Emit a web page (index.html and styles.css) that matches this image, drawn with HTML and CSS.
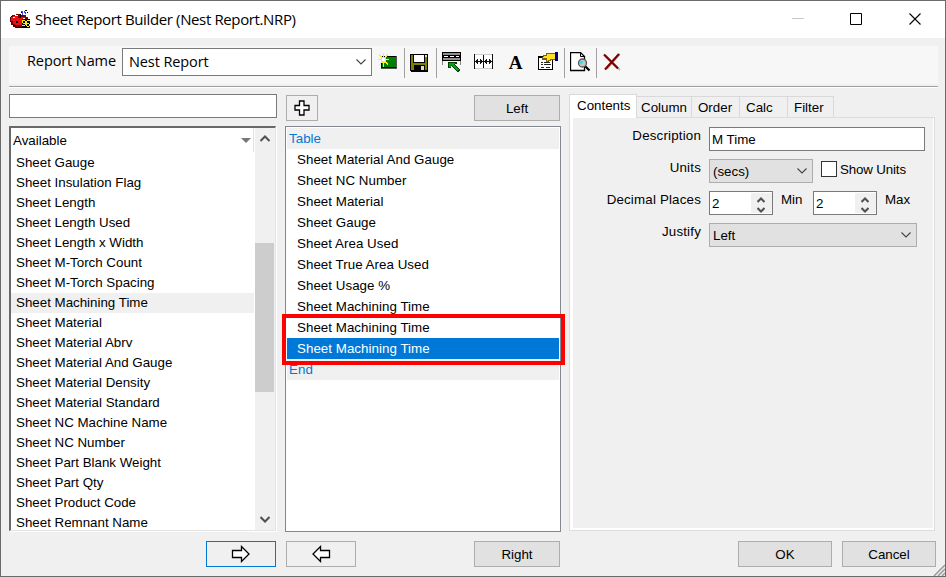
FILE: index.html
```html
<!DOCTYPE html>
<html lang="en">
<head>
    <meta charset="UTF-8">
    <title>Sheet Report Builder (Nest Report.NRP)</title>
    <link rel="stylesheet" href="styles.css">
</head>
<body>
    <div class="window">
        <div class="titlebar">
            <svg class="app-icon" width="22" height="20" viewBox="0 0 22 20" shape-rendering="crispEdges">
                <path d="M2 5h4V4h5v1h5v2h2v8h-2v2h-2v1H5v-1H3v-2H1v-3H0V7h2z" fill="#7a0000"/>
                <path d="M3 6h5v1h7v8H5v-1H3v-3H1V7h2z" fill="#e81010"/>
                <path d="M3 7h2v1H3zM5 5h3v1H5zM13 8h2v1h-2z" fill="#fff"/>
                <path d="M1 6h1v1H1zM6 11h2v2H6zM8 7h2v1H8zM3 15h3v1H3zM6 17h8v1H6zM10 4h1v4h-1zM11 2h1v1h-1zM15 0h2v1h-2zM17 2h1v1h-1z" fill="#000"/>
                <path d="M11 1h2v1h-2zM12 2h1v3h-1zM15 2h1v2h-1zM14 1h1v2h-1z" fill="#3848e0"/>
                <path d="M12 9h8v9h-8z" fill="#000"/>
                <path d="M12 10h3v1h-3zM12 11h1v2h-1zM15 11h1v4h-1zM13 13h2v1h-2zM12 15h3v1h-3zM17 10h3v1h-3zM16 11h1v5h-1zM17 13h2v1h-2zM19 14h1v2h-1zM17 16h2v1h-2z" fill="#ffef00"/>
            </svg>
            <span class="title">Sheet Report Builder (Nest Report.NRP)</span>
            <svg class="caption" width="131" height="14" viewBox="0 0 131 14" fill="none">
                <path d="M0 6.500h12" stroke="#c8c8c8"/>
                <path d="M58.500 1.500h11v11h-11z" stroke="#000"/>
                <path d="M117.500 1.500l11 11M128.500 1.500l-11 11" stroke="#000" stroke-width="1.100"/>
            </svg>
        </div>

        <div class="toolbar">
            <label class="report-label">Report Name</label>
            <div class="report-combo">
                <span>Nest Report</span>
                <svg class="chevron" width="10" height="6" viewBox="0 0 10 6"><path d="M.5.5L5 5 9.500.5"/></svg>
            </div>
            <div class="tool new">
                <svg width="20" height="20" viewBox="0 0 20 20" shape-rendering="crispEdges">
                    <path d="M3 4h16v13H3z" fill="#000"/>
                    <path d="M4 5h14v10H4z" fill="#008000"/>
                    <path d="M18 4h1v12h-1zM3 16h16v1H3z" fill="#555"/>
                    <path d="M5 1h1v14H5zM0 7h11v1H0zM1 2h1v1h1v1h1v1h3V4h1V3h1V2h1v2H9v1H8v5h1v1h1v2H9v-1H8v-1H3v1H2v1H1v-1h1v-1h1V5H2V4H1z" fill="#ffee20"/>
                    <path d="M4 6h3v3H4z" fill="#fff"/>
                </svg>
            </div>
            <div class="sep"></div>
            <div class="tool save">
                <svg width="20" height="20" viewBox="0 0 20 20" shape-rendering="crispEdges">
                    <path d="M1 2h18v18H2v-1H1z" fill="#000"/>
                    <path d="M2 3h2v8h12V3h2v15H2z" fill="#808000"/>
                    <path d="M5 3h10v7H5z" fill="#fff"/>
                    <path d="M4 3h1v8H4zM15 3h1v8h-1zM5 13h11v6H5z" fill="#000"/>
                    <path d="M12 14h3v4h-3zM16 3h2v2h-2z" fill="#ddd"/>
                </svg>
            </div>
            <div class="sep"></div>
            <div class="tool">
                <svg width="20" height="22" viewBox="0 0 20 22" shape-rendering="crispEdges">
                    <path d="M0 1h19v9H0z" fill="#000"/>
                    <path d="M1 2h17v2H1z" fill="#909090"/>
                    <path d="M2 5h4v1H2zM8 5h4v1H8zM14 5h3v1h-3z" fill="#fff"/>
                    <path d="M1 7h17v2H1z" fill="#909090"/>
                    <path d="M0 10h1v4H0zM18 10h1v4h-1z" fill="#888"/>
                    <path d="M6 11h9v2h-2v1h1v1h1v1h1v1h1v1h1v2h-1v1h-2v-1h-1v-1h-1v-1h-1v-1h-1v-1h-1v-1h-1v2H6z" fill="#004000"/>
                    <path d="M7 12h6v1h-1v1h1v1h1v1h1v1h1v1h1v1h-1v1h-1v-1h-1v-1h-1v-1h-1v-1h-1v-1h-1v-1H9v2H7z" fill="#00a020"/>
                </svg>
            </div>
            <div class="tool">
                <svg width="20" height="20" viewBox="0 0 20 20" shape-rendering="crispEdges">
                    <path d="M1 2h17v15H1z" fill="#fff"/>
                    <path d="M0 2h1v15H0zM9 2h1v15H9zM18 2h1v15h-1zM1 9h17v1H1zM2 8h1v3H2zM3 7h1v5H3zM16 8h1v3h-1zM15 7h1v5h-1zM7 8h1v3H7zM6 7h1v5H6zM11 8h1v3h-1zM12 7h1v5h-1z" fill="#111"/>
                    <path d="M1 2h17v1H1zM1 16h17v1H1z" fill="#ccc"/>
                </svg>
            </div>
            <div class="tool letter">A</div>
            <div class="tool">
                <svg width="21" height="20" viewBox="0 0 21 20" shape-rendering="crispEdges">
                    <path d="M0 4h15v14H0z" fill="#000"/>
                    <path d="M1 6h13v11H1z" fill="#fff"/>
                    <path d="M3 10h2v1H3zM3 12h2v1H3zM3 15h3v1H3zM6 12h7v1H6zM6 10h6v1H6zM8 15h4v1H8z" fill="#222"/>
                    <path d="M5 3h3V1h9v7h-4v1h-2v1H8V8H4V5h1z" fill="#806000"/>
                    <path d="M6 4h3V2h8v5h-5v1h-2v1H9V6H5V5h1z" fill="#ffe020"/>
                    <path d="M17 0h3v9h-3z" fill="#000080"/>
                </svg>
            </div>
            <div class="sep"></div>
            <div class="tool">
                <svg width="21" height="20" viewBox="0 0 21 20">
                    <path d="M.5.5h10l4 4v14H.500z" fill="#fff" stroke="#000" stroke-width="1.300"/>
                    <path d="M10.500.5v4h4" fill="none" stroke="#000"/>
                    <path d="M15 14l4.500 4.500" stroke="#000" stroke-width="2.200"/>
                    <circle cx="12.500" cy="11" r="4" fill="#c4c4c4" stroke="#555" stroke-width="1.300"/>
                    <path d="M10 10h3M11 9v3" stroke="#20e0f0" stroke-width="1.500"/>
                </svg>
            </div>
            <div class="sep"></div>
            <div class="tool">
                <svg width="20" height="20" viewBox="0 0 20 20">
                    <path d="M3 3l15 15M18 2L5 17" stroke="#b8b8b8" stroke-width="1.800"/>
                    <path d="M2 2.500l14 14M17 2L3 17.500" stroke="#800000" stroke-width="2.200"/>
                </svg>
            </div>
        </div>

        <div class="main">
            <div class="available-col">
                <div class="search"></div>
                <div class="available">
                    <div class="available-body">
                        <div class="available-head"><span>Available</span><i class="sort"></i></div>
                        <ul class="fields">
                            <li>Sheet Gauge</li>
                            <li>Sheet Insulation Flag</li>
                            <li>Sheet Length</li>
                            <li>Sheet Length Used</li>
                            <li>Sheet Length x Width</li>
                            <li>Sheet M-Torch Count</li>
                            <li>Sheet M-Torch Spacing</li>
                            <li class="current">Sheet Machining Time</li>
                            <li>Sheet Material</li>
                            <li>Sheet Material Abrv</li>
                            <li>Sheet Material And Gauge</li>
                            <li>Sheet Material Density</li>
                            <li>Sheet Material Standard</li>
                            <li>Sheet NC Machine Name</li>
                            <li>Sheet NC Number</li>
                            <li>Sheet Part Blank Weight</li>
                            <li>Sheet Part Qty</li>
                            <li>Sheet Product Code</li>
                            <li>Sheet Remnant Name</li>
                        </ul>
                    </div>
                    <div class="scrollbar">
                        <svg width="10" height="7" viewBox="0 0 10 7"><path d="M.5 6L5 1.500 9.500 6"/></svg>
                        <div class="thumb"></div>
                        <svg width="10" height="7" viewBox="0 0 10 7"><path d="M.5 1L5 5.500 9.500 1"/></svg>
                    </div>
                </div>
                <button class="btn arrow focused">
                    <svg width="20" height="18" viewBox="0 0 20 18"><path d="M1.500 5.500h9V1.500l7.500 7.500-7.500 7.500v-4h-9z"/></svg>
                </button>
            </div>

            <div class="table-col">
                <div class="row-top">
                    <button class="btn add">
                        <svg width="16" height="16" viewBox="0 0 16 16"><path d="M5.500 1h4.500v4.500H15V10h-5v5H5.500v-5H1V5.500h4.500z"/></svg>
                    </button>
                    <button class="btn side">Left</button>
                </div>
                <div class="table-list">
                    <div class="group">Table</div>
                    <div class="item">Sheet Material And Gauge</div>
                    <div class="item">Sheet NC Number</div>
                    <div class="item">Sheet Material</div>
                    <div class="item">Sheet Gauge</div>
                    <div class="item">Sheet Area Used</div>
                    <div class="item">Sheet True Area Used</div>
                    <div class="item">Sheet Usage %</div>
                    <div class="item">Sheet Machining Time</div>
                    <div class="item">Sheet Machining Time</div>
                    <div class="item selected">Sheet Machining Time</div>
                    <div class="group">End</div>
                    <div class="highlight"></div>
                </div>
                <div class="row-bottom">
                    <button class="btn arrow">
                        <svg width="20" height="18" viewBox="0 0 20 18"><path d="M18.500 5.500h-9V1.500L2 9l7.500 7.500v-4h9z"/></svg>
                    </button>
                    <button class="btn side">Right</button>
                </div>
            </div>

            <div class="props-col">
                <div class="tabs">
                    <div class="tab active">Contents</div>
                    <div class="tab column">Column</div>
                    <div class="tab order">Order</div>
                    <div class="tab calc">Calc</div>
                    <div class="tab filter">Filter</div>
                </div>
                <div class="page">
                    <div class="form-row">
                        <label>Description</label>
                        <div class="input description">M Time</div>
                    </div>
                    <div class="form-row">
                        <label>Units</label>
                        <div class="select units">(secs)<svg class="chevron" width="10" height="6" viewBox="0 0 10 6"><path d="M.5.5L5 5 9.500.5"/></svg></div>
                        <span class="checkbox"></span>
                        <span class="text check-text">Show Units</span>
                    </div>
                    <div class="form-row">
                        <label>Decimal Places</label>
                        <div class="input spin">2<span class="updown"><svg width="8" height="16" viewBox="0 0 8 16"><path d="M.5 5L4 1.500 7.500 5M.5 11L4 14.500 7.500 11"/></svg></span></div>
                        <span class="text min">Min</span>
                        <div class="input spin">2<span class="updown"><svg width="8" height="16" viewBox="0 0 8 16"><path d="M.5 5L4 1.500 7.500 5M.5 11L4 14.500 7.500 11"/></svg></span></div>
                        <span class="text max">Max</span>
                    </div>
                    <div class="form-row">
                        <label>Justify</label>
                        <div class="select justify">Left<svg class="chevron" width="10" height="6" viewBox="0 0 10 6"><path d="M.5.5L5 5 9.500.5"/></svg></div>
                    </div>
                </div>
                <div class="dialog-buttons">
                    <button class="btn dialog">OK</button>
                    <button class="btn dialog">Cancel</button>
                </div>
            </div>
        </div>
        <svg class="grip" width="12" height="12" viewBox="0 0 12 12"><path d="M1 12L12 1M5 12l7-7M9 12l3-3"/></svg>
    </div>
</body>
</html>
```
FILE: styles.css
```css
* {
    margin: 0;
    padding: 0;
    box-sizing: border-box;
}

body {
    width: 946px;
    height: 577px;
    overflow: hidden;
    font-family: "Liberation Sans", Arial, sans-serif;
    font-size: 13.33px;
    color: #000;
}

.window {
    position: relative;
    width: 946px;
    height: 577px;
    background: #f0f0f0;
    border: 1px solid #6a6a6a;
}

.titlebar {
    display: flex;
    align-items: center;
    height: 37px;
    padding-left: 9px;
    padding-right: 22px;
    background: #fff;
}

.title {
    margin: -2px 0 0 3px;
    font-family: "Open Sans", "Noto Sans", sans-serif;
    font-size: 15px;
    letter-spacing: -0.37px;
    white-space: nowrap;
}

.caption {
    margin-left: auto;
    margin-top: -2px;
}

.toolbar {
    display: flex;
    align-items: flex-start;
    width: 929px;
    height: 41px;
    margin: 8px 0 0 8px;
    padding-top: 2px;
    background: linear-gradient(#f7f7f7 38px, #f0f0f0 38px);
    border-bottom: 1px solid #a0a0a0;
    box-shadow: 0 1px 0 #fff;
}

.report-label,
.report-combo {
    font-family: "Open Sans", "Noto Sans", sans-serif;
    font-size: 14.5px;
    letter-spacing: -0.1px;
    line-height: 26px;
}

.report-label {
    width: 113px;
    padding-left: 18px;
    white-space: nowrap;
}

.report-combo {
    display: flex;
    align-items: center;
    justify-content: space-between;
    width: 250px;
    height: 28px;
    padding: 0 5px 0 6px;
    background: #fff;
    border: 1px solid #7a7a7a;
}

.chevron {
    fill: none;
    stroke: #444;
    stroke-width: 1.1;
}

.tool {
    display: flex;
    align-items: center;
    justify-content: center;
    width: 32px;
    height: 28px;
}

.new {
    padding-right: 1px;
}

.save {
    padding-right: 3px;
}

.sep {
    width: 1px;
    height: 30px;
    margin: 0 -1px 0 0;
    background: #a0a0a0;
}

.letter {
    padding: 2px 1px 0 0;
    font-family: "Liberation Serif", serif;
    font-size: 19px;
    font-weight: bold;
}

.main {
    display: flex;
    gap: 8px;
    padding: 7px 0 0 8px;
}

.available-col {
    display: flex;
    flex-direction: column;
    width: 268px;
}

.search {
    height: 24px;
    background: #fff;
    border: 1px solid #7a7a7a;
}

.available {
    display: flex;
    width: 267px;
    height: 405px;
    margin-top: 8px;
    background: #fff;
    border: 2px solid;
    border-color: #696969 #e3e3e3 #e3e3e3 #696969;
    border-width: 2px 1px 1px 2px;
    box-shadow: 1px 1px 0 #fff;
    overflow: hidden;
}

.available-body {
    flex: 1;
}

.available-head {
    display: flex;
    align-items: center;
    justify-content: space-between;
    height: 24px;
    padding: 0 2px;
    border-right: 1px solid #e0e0e0;
    margin: 0 1px 1px 0;
}

.sort {
    border: 5px solid transparent;
    border-top-color: #777;
    border-bottom: none;
}

.fields {
    list-style: none;
}

.fields li {
    height: 20px;
    margin-right: 1px;
    padding-left: 5px;
    line-height: 20px;
    white-space: nowrap;
}

.fields .current {
    background: #f0f0f0;
}

.scrollbar {
    display: flex;
    flex-direction: column;
    align-items: center;
    width: 20px;
    padding: 7px 1px 7px 0;
    background: #f0f0f0;
}

.scrollbar svg {
    fill: none;
    stroke: #505050;
    stroke-width: 2;
}

.thumb {
    width: 19px;
    height: 149px;
    margin: 101px 0 124px;
    background: #cdcdcd;
}

.btn {
    display: flex;
    align-items: center;
    justify-content: center;
    height: 26px;
    background: #e1e1e1;
    border: 1px solid #adadad;
    font: inherit;
}

.btn svg {
    fill: #fff;
    stroke: #000;
    stroke-width: 1.3;
}

.arrow {
    width: 70px;
    background: #f0f0f0;
}

.focused {
    align-self: flex-end;
    margin: 10px 1px 0 0;
    border-color: #0078d7;
}

.table-col {
    width: 276px;
}

.row-top,
.row-bottom {
    display: flex;
    justify-content: space-between;
    padding: 1px 1px 0;
}

.row-bottom {
    padding-top: 9px;
}

.add {
    width: 32px;
    background: #f0f0f0;
}

.side {
    width: 86px;
}

.table-list {
    position: relative;
    height: 406px;
    margin-top: 5px;
    padding: 1px;
    background: #fff;
    border: 1px solid #828790;
}

.group,
.item {
    height: 21px;
    padding-left: 10px;
    line-height: 21px;
    letter-spacing: 0.04px;
}

.group {
    padding-left: 2px;
    color: #0078d7;
    background: #f0f0f0;
}

.selected {
    color: #fff;
    background: #0078d7;
}

.highlight {
    position: absolute;
    left: -4px;
    top: 187px;
    width: 283px;
    height: 51px;
    border: 4px solid #ff0000;
}

.props-col {
    width: 367px;
}

.tabs {
    display: flex;
    align-items: flex-end;
    height: 23px;
}

.tab {
    height: 21px;
    padding-left: 4px;
    line-height: 21px;
    background: #f0f0f0;
    border: 1px solid #d9d9d9;
    border-left: none;
    border-bottom: none;
}

.tab.active {
    position: relative;
    width: 68px;
    height: 24px;
    margin-bottom: -1px;
    padding-left: 7px;
    background: #fff;
    border-left: 1px solid #d9d9d9;
}

.column {
    width: 55px;
}

.order {
    width: 48px;
    padding-left: 6px;
}

.calc {
    width: 48px;
    padding-left: 6px;
}

.filter {
    width: 46px;
    padding-left: 6px;
}

.page {
    width: 366px;
    height: 414px;
    padding-top: 9px;
    border: 1px solid #dcdcdc;
    box-shadow: inset 3px 0 #fff, inset -1px -2px #fff;
}

.form-row {
    display: flex;
    height: 32px;
}

.form-row label {
    width: 131px;
    margin-right: 8px;
    text-align: right;
    line-height: 17px;
    letter-spacing: 0.18px;
}

.input,
.select {
    display: flex;
    align-items: center;
    justify-content: space-between;
    height: 24px;
    padding-left: 2px;
    background: #fff;
    border: 1px solid #7a7a7a;
}

.select {
    padding: 0 5px 0 3px;
    background: #e1e1e1;
    border-color: #adadad;
}

.description {
    width: 216px;
}

.units {
    width: 104px;
}

.justify {
    width: 208px;
}

.spin {
    width: 64px;
}

.updown {
    display: flex;
    align-items: center;
    justify-content: center;
    width: 21px;
    height: 20px;
    background: #f0f0f0;
}

.updown svg {
    margin-left: -2px;
    margin-top: 4px;
    fill: none;
    stroke: #505050;
    stroke-width: 2;
}

.checkbox {
    width: 16px;
    height: 16px;
    margin: 2px 3px 0 8px;
    background: #fff;
    border: 1px solid #333;
}

.text {
    line-height: 17px;
}

.check-text {
    margin-top: 2px;
    letter-spacing: -0.15px;
}

.min {
    width: 32px;
    margin-left: 8px;
}

.max {
    margin-left: 8px;
}

.dialog-buttons {
    display: flex;
    justify-content: flex-end;
    gap: 10px;
    margin-top: 10px;
}

.dialog {
    width: 94px;
}

.grip {
    position: absolute;
    right: 0;
    bottom: 0;
    stroke: #999;
    stroke-width: 1.5;
}
```
